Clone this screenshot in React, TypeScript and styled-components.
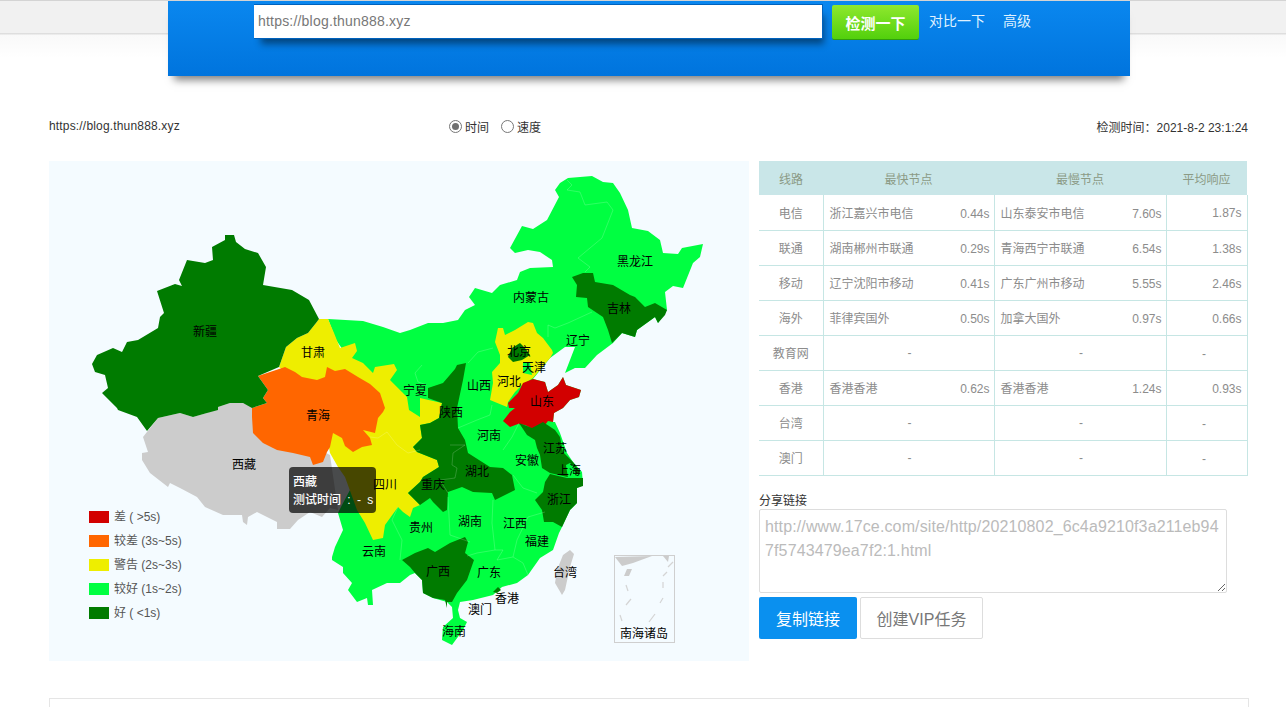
import React from 'react';
import styled, { createGlobalStyle } from 'styled-components';

const FONT = '"Liberation Sans", "Noto Sans CJK SC", sans-serif';

const COLORS = {
  red: '#d20000',
  orange: '#ff6600',
  yellow: '#eeee00',
  green: '#00ff41',
  dark: '#007b00',
  gray: '#cccccc',
};

const GlobalStyle = createGlobalStyle`
  html, body {
    margin: 0;
    padding: 0;
    overflow: hidden;
    background: #fff;
    font-family: ${FONT};
    font-size: 12px;
    color: #333;
  }
`;

const Page = styled.div`
  width: 1286px;
  height: 707px;
  overflow: hidden;
`;

const TopArea = styled.div`
  height: 77px;
  padding-top: 1px;
  box-sizing: border-box;
  background: linear-gradient(
    to bottom,
    #d4d4d4 0,
    #d4d4d4 1px,
    #f1f1f1 1px,
    #f1f1f1 33px,
    #dedede 33px,
    #dedede 34px,
    #f9f9f9 35px,
    #ffffff 58px
  );
`;

const SearchBar = styled.div`
  width: 962px;
  height: 75px;
  margin-left: 168px;
  padding: 3px 0 0 86px;
  box-sizing: border-box;
  display: flex;
  align-items: flex-start;
  background: linear-gradient(to bottom, #0a87ef, #0074dd);
  box-shadow: 0 10px 8px -6px rgba(0, 0, 0, 0.5);
`;

const UrlBox = styled.div`
  width: 569px;
  height: 35px;
  box-sizing: border-box;
  padding-left: 4px;
  line-height: 33px;
  font-size: 14px;
  letter-spacing: 0.2px;
  color: #777;
  background: #fff;
  border: 1px solid #0062bd;
  border-left: 0;
  box-shadow: 4px 8px 7px -3px rgba(0, 0, 0, 0.45);
`;

const CheckButton = styled.button`
  width: 87px;
  height: 34px;
  margin: 1px 0 0 9px;
  padding: 0;
  border: 0;
  border-radius: 2px;
  font-family: ${FONT};
  font-size: 15px;
  font-weight: 700;
  color: #fff;
  background: linear-gradient(to bottom, #8fe82e, #52d00c);
  box-shadow: 0 1px 0 #2f9e10;
`;

const BarLink = styled.a<{ $gap: number }>`
  margin-left: ${(p) => p.$gap}px;
  line-height: 35px;
  font-size: 14px;
  color: #dff1ff;
`;

const Content = styled.div`
  width: 1200px;
  margin-left: 49px;
`;

const MetaRow = styled.div`
  display: grid;
  grid-template-columns: 400px 1fr auto;
  align-items: center;
  height: 20px;
  margin-top: 39px;
  padding-right: 1px;
  color: #333;
`;

const SiteUrl = styled.span`
  letter-spacing: 0.17px;
`;

const RadioGroup = styled.div`
  display: flex;
  align-items: center;
`;

const RadioMark = styled.span<{ $checked?: boolean }>`
  width: 13px;
  height: 13px;
  box-sizing: border-box;
  margin-right: 3px;
  border-radius: 50%;
  border: 1px solid #777;
  background: #fff;
  display: flex;
  align-items: center;
  justify-content: center;

  &::after {
    content: '';
    width: 7px;
    height: 7px;
    border-radius: 50%;
    background: ${(p) => (p.$checked ? '#707070' : 'transparent')};
  }
`;

const RadioText = styled.span`
  margin-right: 12px;
`;

const MainRow = styled.div`
  display: grid;
  grid-template-columns: 700px 489px;
  column-gap: 10px;
  margin-top: 25px;
`;

const MapPanel = styled.div`
  position: relative;
  width: 700px;
  height: 500px;
  background: #f4fbff;
`;

const MapSvg = styled.svg`
  display: block;
  width: 700px;
  height: 500px;
`;

const RegionLabel = styled.text`
  font-family: ${FONT};
  font-size: 12px;
  fill: #000;
  text-anchor: middle;
  dominant-baseline: central;
`;

const Tooltip = styled.div`
  position: absolute;
  left: 240px;
  top: 306px;
  width: 87px;
  height: 46px;
  box-sizing: border-box;
  padding: 6px 4px;
  border-radius: 4px;
  background: rgba(0, 0, 0, 0.7);
  color: #fff;
  font-weight: 500;
  line-height: 18px;
  word-spacing: 3px;
  white-space: nowrap;
`;

const Legend = styled.div`
  position: absolute;
  left: 40px;
  top: 345px;
  display: flex;
  flex-direction: column;
  gap: 6px;
`;

const LegendRow = styled.div`
  display: flex;
  align-items: center;
  height: 18px;
  color: #555;
`;

const Swatch = styled.span<{ $color: string }>`
  width: 20px;
  height: 12px;
  margin: 4px 5px 0 0;
  background: ${(p) => p.$color};
`;

const SideColumn = styled.div`
  display: flex;
  flex-direction: column;
`;

const ResultTable = styled.table`
  width: 488px;
  table-layout: fixed;
  border-collapse: collapse;
  color: #8c8c8c;
`;

const HeadCell = styled.th`
  height: 34px;
  padding: 0;
  font-weight: 400;
  color: #8b9a85;
  background: #c9e6e8;
`;

const Row = styled.tr`
  height: 35px;
  border-bottom: 1px solid #c6e6e4;
`;

const LineCell = styled.td`
  padding: 0;
  text-align: center;
  border-right: 1px solid #c6e6e4;
`;

const DataCell = styled.td`
  padding: 0 4px 0 6px;
  border-right: 1px solid #c6e6e4;
`;

const AvgCell = styled.td`
  padding: 2px 5px 0 0;
  text-align: right;
  border-right: 1px solid #c6e6e4;
`;

const NodeLine = styled.div`
  display: flex;
  align-items: baseline;
  justify-content: space-between;
`;

const EmptyMark = styled.div`
  text-align: center;
`;

const ShareLabel = styled.div`
  margin-top: 17px;
  line-height: 16px;
  color: #333;
`;

const ShareBox = styled.textarea`
  display: block;
  width: 468px;
  height: 84px;
  box-sizing: border-box;
  margin: 0;
  padding: 5px;
  border: 1px solid #ddd;
  border-radius: 2px;
  font-family: ${FONT};
  font-size: 16px;
  line-height: 24px;
  letter-spacing: 0.13px;
  color: #bbb;
  word-break: break-all;
  outline: none;
`;

const ButtonRow = styled.div`
  display: flex;
  gap: 3px;
  margin-top: 4px;
`;

const CopyButton = styled.button`
  width: 98px;
  height: 42px;
  padding: 0;
  border: 0;
  border-radius: 2px;
  font-family: ${FONT};
  font-size: 16px;
  color: #fff;
  background: #0a90ef;
`;

const VipButton = styled.button`
  width: 123px;
  height: 42px;
  padding: 0;
  border: 1px solid #ddd;
  border-radius: 2px;
  font-family: ${FONT};
  font-size: 16px;
  color: #777;
  background: #fff;
`;

const BottomBox = styled.div`
  height: 100px;
  margin-top: 37px;
  border: 1px solid #e5e5e5;
`;

const regions: { color: string; points: string }[] = [
  // everything east of the plateau, the other provinces are painted over it
  {
    color: COLORS.green,
    points:
      '328,319 363,321 383,327 400,333 410,330 428,323 443,323 458,320 465,310 475,305 469,297 475,288 492,293 500,285 517,280 520,272 530,268 553,267 552,260 540,252 528,250 515,253 510,248 522,226 533,229 547,220 559,197 555,190 560,183 568,178 592,176 603,182 613,183 620,193 628,210 632,228 648,231 660,240 663,253 678,254 682,248 703,244 700,257 693,263 683,288 673,286 665,292 667,310 658,323 655,317 637,330 635,337 622,333 613,343 597,355 585,368 575,368 565,373 570,360 575,347 565,347 550,358 533,379 545,382 548,392 558,385 563,377 566,385 581,390 579,397 570,400 563,408 554,413 553,422 555,422 560,433 567,453 573,462 582,472 583,485 577,488 577,503 570,510 562,527 559,533 553,550 540,558 528,575 517,583 502,587 493,595 473,600 460,602 458,610 460,618 467,622 463,630 452,645 442,640 443,627 453,618 452,607 447,602 433,598 423,593 422,580 415,573 410,575 400,583 387,583 372,590 373,605 368,605 367,598 357,602 348,590 352,583 343,573 343,567 332,560 332,557 335,547 343,530 338,513 342,505 350,490 360,460 385,420 392,395 385,382 368,372 350,360 336,340',
  },
  // Tibet
  {
    color: COLORS.gray,
    points:
      '218,407 230,403 243,403 253,407 300,440 330,455 338,510 330,508 322,517 310,512 298,520 290,529 277,529 277,522 257,512 248,517 247,525 243,522 242,515 223,515 205,507 197,497 180,488 170,483 168,487 150,473 142,460 142,453 148,452 143,437 158,418 180,413 193,417 207,413',
  },
  // Gansu and Sichuan
  {
    color: COLORS.yellow,
    points:
      '319,319 328,319 334,333 340,348 355,343 357,351 352,358 363,363 373,373 375,367 394,364 397,370 390,380 402,392 407,397 409,410 420,417 420,398 442,403 439,418 430,423 420,425 422,438 413,447 417,452 437,460 439,467 423,477 420,482 408,493 420,505 413,508 410,517 403,512 398,507 385,525 383,538 373,540 365,523 357,510 345,477 338,467 330,453 320,400 279,367 286,347 297,338 308,333 316,323',
  },
  // Qinghai
  {
    color: COLORS.orange,
    points:
      '258,376 285,367 295,372 302,377 317,380 325,377 327,367 335,371 345,369 358,377 370,384 380,393 385,408 383,412 378,418 375,433 363,430 370,438 372,445 362,447 353,452 345,446 342,438 333,433 330,447 327,452 323,462 313,465 310,457 293,453 277,450 263,443 253,433 252,417 252,408 267,403 263,398 268,390',
  },
  // Xinjiang
  {
    color: COLORS.dark,
    points:
      '225,235 234,235 236,242 245,249 258,253 266,267 263,285 292,290 309,300 319,319 316,323 308,333 297,338 286,347 279,367 258,376 268,390 263,398 267,403 252,408 243,403 230,403 218,407 218,410 207,413 193,417 180,413 158,418 147,431 137,417 118,410 117,408 102,393 108,388 105,375 95,372 92,364 97,355 113,348 122,352 127,342 138,340 158,328 160,317 164,313 157,291 175,284 182,286 179,280 187,260 205,263 213,260 212,247 225,240',
  },
  // Jilin
  {
    color: COLORS.dark,
    points:
      '572,277 583,273 593,273 595,282 613,285 630,295 635,297 645,307 655,303 667,310 665,315 658,323 655,317 637,330 635,337 622,333 612,343 608,330 603,317 588,307 587,298 576,297 577,285',
  },
  // Hebei
  {
    color: COLORS.yellow,
    points:
      '495,342 498,328 503,328 505,335 515,330 528,322 533,323 537,333 543,338 552,350 553,353 550,358 533,378 522,385 515,392 508,402 507,407 490,400 493,383 492,372 500,363 500,355',
  },
  { color: COLORS.green, points: '523,362 530,363 532,375 523,373' },
  { color: COLORS.dark, points: '508,357 512,348 520,343 525,348 530,355 522,360 513,362' },
  // Shandong
  {
    color: COLORS.red,
    points:
      '533,379 545,382 548,392 558,385 563,377 566,385 581,390 579,397 570,400 563,408 554,413 553,422 548,421 545,425 533,429 525,425 518,424 510,427 503,421 510,412 515,408 509,408 508,403 518,393 523,383',
  },
  // Shaanxi, Chongqing and Hubei run together
  {
    color: COLORS.dark,
    points:
      '466,363 463,380 457,408 458,428 465,440 468,453 490,467 503,468 512,475 515,490 495,500 492,493 473,492 462,487 448,492 447,510 443,512 433,502 430,498 420,505 408,493 420,482 423,477 439,467 437,460 417,452 413,447 422,438 420,425 430,423 439,418 442,403 428,398 428,388 443,383 455,369 457,365',
  },
  // Guangxi
  {
    color: COLORS.dark,
    points:
      '402,560 415,553 428,548 435,552 450,543 465,537 468,542 465,553 474,560 467,580 457,593 452,602 447,602 447,608 445,600 433,598 423,593 422,580 415,573 410,567',
  },
  // Jiangsu
  {
    color: COLORS.dark,
    points:
      '519,423 532,428 543,422 555,430 560,437 563,452 573,462 580,472 572,478 550,473 542,468 540,455 537,448 535,440 527,435',
  },
  { color: COLORS.green, points: '566,465 570,463 575,468 575,478 568,478' },
  // Zhejiang
  {
    color: COLORS.dark,
    points:
      '550,474 567,478 583,478 583,486 577,488 577,503 570,510 562,527 553,522 544,522 542,510 535,500 543,492 545,482',
  },
  // Taiwan
  { color: COLORS.gray, points: '570,550 574,554 570,567 565,590 562,595 555,583 557,570 563,555' },
  // Hong Kong
  { color: COLORS.dark, points: '493,592 498,587 501,590 497,593' },
];

const borderLines = [
  '567,180 572,185 567,190 580,192 585,205 607,202 613,210 602,238 578,258 590,267 585,272',
  '592,312 568,323 555,328 548,325 548,337',
  '493,348 478,352 468,363',
  '422,365 415,373 418,382 427,385',
  '492,405 490,415 477,420 458,428',
  '450,445 465,445 453,453 452,465 457,468 455,478 440,480 448,493',
  '370,437 378,438 387,432 397,445 408,453 420,450',
  '448,497 450,535 470,542',
  '493,500 492,523 495,550 477,553 467,556',
  '545,512 528,517 517,540 513,557 523,563 528,575',
  '495,550 503,550 497,560 513,557',
  '503,450 512,437 519,423',
  '513,475 523,488 537,493',
  '398,507 392,520 402,540 400,560',
];

const labels: [string, number, number][] = [
  ['新疆', 205, 332],
  ['甘肃', 313, 353],
  ['青海', 318, 416],
  ['西藏', 244, 465],
  ['四川', 385, 485],
  ['云南', 374, 552],
  ['贵州', 421, 528],
  ['重庆', 433, 485],
  ['湖北', 477, 472],
  ['湖南', 470, 522],
  ['江西', 515, 524],
  ['福建', 537, 542],
  ['广西', 438, 572],
  ['广东', 489, 573],
  ['海南', 454, 632],
  ['澳门', 480, 610],
  ['香港', 507, 599],
  ['台湾', 565, 573],
  ['浙江', 559, 500],
  ['上海', 569, 471],
  ['江苏', 555, 449],
  ['安徽', 527, 461],
  ['河南', 489, 436],
  ['山东', 542, 402],
  ['陕西', 451, 413],
  ['宁夏', 415, 391],
  ['山西', 479, 386],
  ['河北', 509, 382],
  ['天津', 534, 368],
  ['北京', 519, 352],
  ['辽宁', 578, 341],
  ['内蒙古', 531, 298],
  ['吉林', 619, 309],
  ['黑龙江', 635, 262],
  ['南海诸岛', 644, 634],
];

const legendItems = [
  { color: COLORS.red, text: '差 ( >5s)' },
  { color: COLORS.orange, text: '较差 (3s~5s)' },
  { color: COLORS.yellow, text: '警告 (2s~3s)' },
  { color: COLORS.green, text: '较好 (1s~2s)' },
  { color: COLORS.dark, text: '好 ( <1s)' },
];

interface ResultRow {
  line: string;
  fast?: [string, string];
  slow?: [string, string];
  avg?: string;
}

const results: ResultRow[] = [
  { line: '电信', fast: ['浙江嘉兴市电信', '0.44s'], slow: ['山东泰安市电信', '7.60s'], avg: '1.87s' },
  { line: '联通', fast: ['湖南郴州市联通', '0.29s'], slow: ['青海西宁市联通', '6.54s'], avg: '1.38s' },
  { line: '移动', fast: ['辽宁沈阳市移动', '0.41s'], slow: ['广东广州市移动', '5.55s'], avg: '2.46s' },
  { line: '海外', fast: ['菲律宾国外', '0.50s'], slow: ['加拿大国外', '0.97s'], avg: '0.66s' },
  { line: '教育网' },
  { line: '香港', fast: ['香港香港', '0.62s'], slow: ['香港香港', '1.24s'], avg: '0.93s' },
  { line: '台湾' },
  { line: '澳门' },
];

const NodeCell = ({ node }: { node?: [string, string] }) => (
  <DataCell>
    {node ? (
      <NodeLine>
        <span>{node[0]}</span>
        <span>{node[1]}</span>
      </NodeLine>
    ) : (
      <EmptyMark>-</EmptyMark>
    )}
  </DataCell>
);

const ChinaMap = () => (
  <MapSvg viewBox="49 161 700 500">
    {regions.map((r, i) => (
      <polygon key={i} points={r.points} fill={r.color} />
    ))}
    {borderLines.map((line, i) => (
      <polyline key={i} points={line} fill="none" stroke="rgba(255,255,255,0.18)" strokeWidth="1" />
    ))}

    {/* South China Sea inset */}
    <rect x="614.5" y="555.5" width="60" height="87" fill="none" stroke="#cfcfcf" />
    <polygon points="615,557 652,556 633,563 622,566" fill={COLORS.gray} />
    <polygon points="663,556 669,556 668,562" fill={COLORS.gray} />
    <polygon points="627,569 632,569 629,576 624,576" fill={COLORS.gray} />
    <g stroke="#d4d4d4" strokeWidth="1.2">
      <line x1="673" y1="562" x2="668" y2="567" />
      <line x1="667" y1="572" x2="663" y2="576" />
      <line x1="663" y1="582" x2="663" y2="588" />
      <line x1="663" y1="598" x2="660" y2="603" />
      <line x1="655" y1="614" x2="649" y2="622" />
      <line x1="620" y1="615" x2="622" y2="621" />
      <line x1="631" y1="599" x2="626" y2="605" />
      <line x1="626" y1="585" x2="628" y2="591" />
    </g>

    {labels.map(([name, x, y]) => (
      <RegionLabel key={name} x={x} y={y}>
        {name}
      </RegionLabel>
    ))}
  </MapSvg>
);

export default function App() {
  return (
    <Page>
      <GlobalStyle />
      <TopArea>
        <SearchBar>
          <UrlBox>https://blog.thun888.xyz</UrlBox>
          <CheckButton>检测一下</CheckButton>
          <BarLink $gap={10}>对比一下</BarLink>
          <BarLink $gap={18}>高级</BarLink>
        </SearchBar>
      </TopArea>

      <Content>
        <MetaRow>
          <SiteUrl>https://blog.thun888.xyz</SiteUrl>
          <RadioGroup>
            <RadioMark $checked />
            <RadioText>时间</RadioText>
            <RadioMark />
            <RadioText>速度</RadioText>
          </RadioGroup>
          <span>检测时间：2021-8-2 23:1:24</span>
        </MetaRow>

        <MainRow>
          <MapPanel>
            <ChinaMap />
            <Legend>
              {legendItems.map((item) => (
                <LegendRow key={item.text}>
                  <Swatch $color={item.color} />
                  {item.text}
                </LegendRow>
              ))}
            </Legend>
            <Tooltip>
              西藏
              <br />
              测试时间 : - s
            </Tooltip>
          </MapPanel>

          <SideColumn>
            <ResultTable>
              <colgroup>
                <col style={{ width: 64 }} />
                <col style={{ width: 171 }} />
                <col style={{ width: 172 }} />
                <col style={{ width: 81 }} />
              </colgroup>
              <thead>
                <tr>
                  <HeadCell>线路</HeadCell>
                  <HeadCell>最快节点</HeadCell>
                  <HeadCell>最慢节点</HeadCell>
                  <HeadCell>平均响应</HeadCell>
                </tr>
              </thead>
              <tbody>
                {results.map((row) => (
                  <Row key={row.line}>
                    <LineCell>{row.line}</LineCell>
                    <NodeCell node={row.fast} />
                    <NodeCell node={row.slow} />
                    <AvgCell>{row.avg ?? <EmptyMark>-</EmptyMark>}</AvgCell>
                  </Row>
                ))}
              </tbody>
            </ResultTable>

            <ShareLabel>分享链接</ShareLabel>
            <ShareBox
              readOnly
              defaultValue="http://www.17ce.com/site/http/20210802_6c4a9210f3a211eb947f5743479ea7f2:1.html"
            />
            <ButtonRow>
              <CopyButton>复制链接</CopyButton>
              <VipButton>创建VIP任务</VipButton>
            </ButtonRow>
          </SideColumn>
        </MainRow>

        <BottomBox />
      </Content>
    </Page>
  );
}
